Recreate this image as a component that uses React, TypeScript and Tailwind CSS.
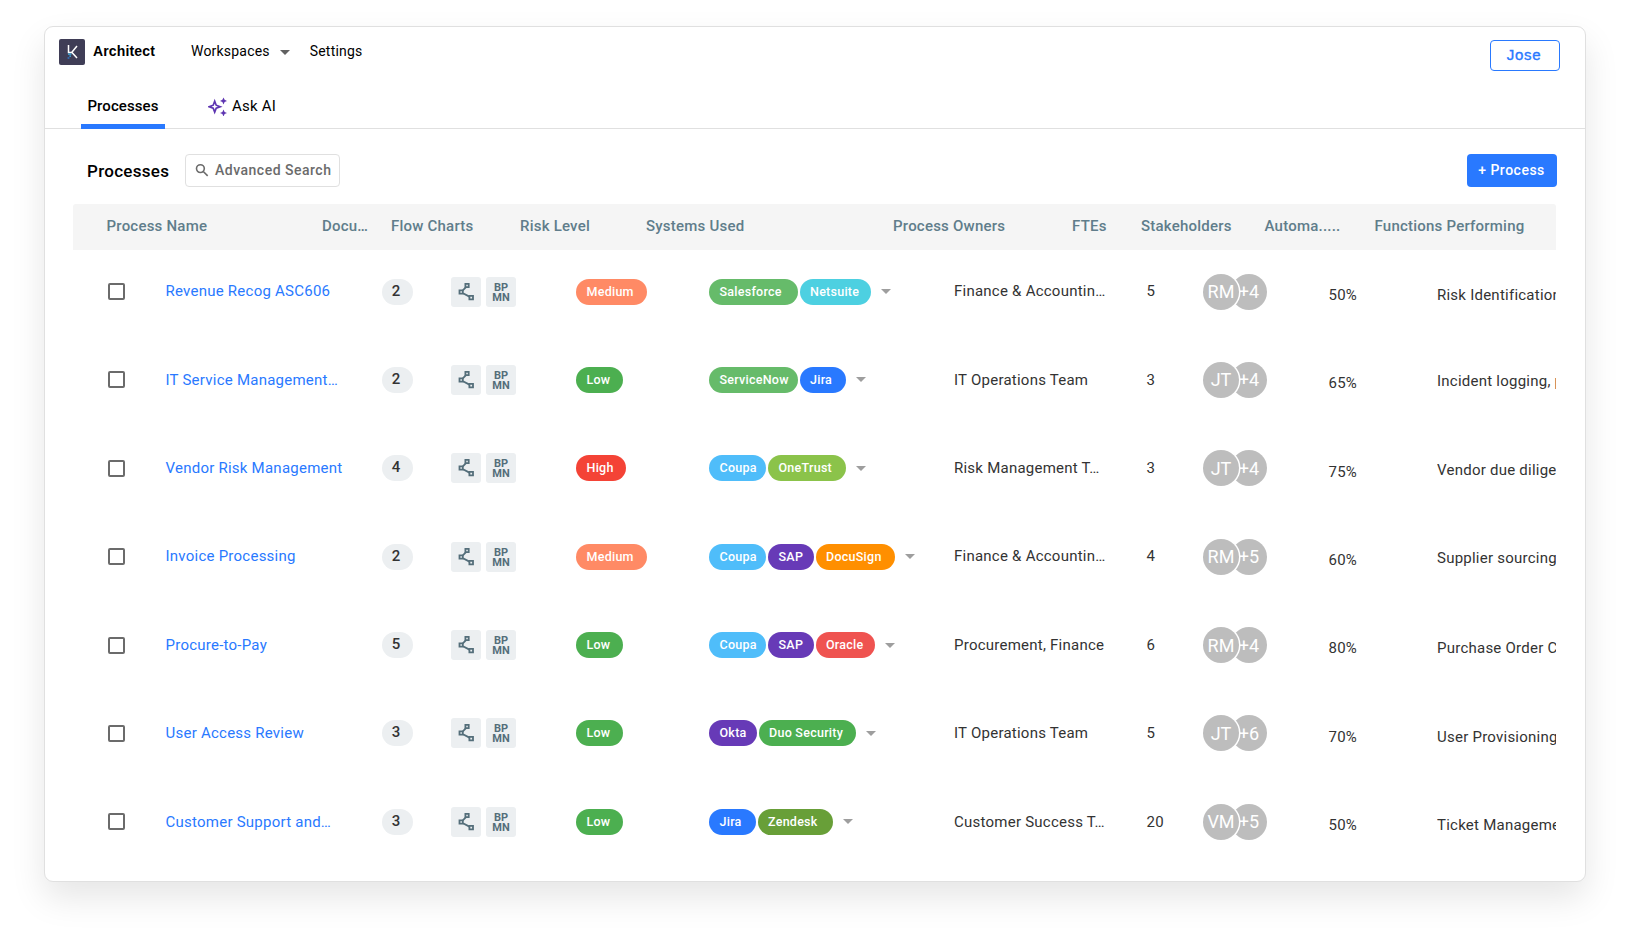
import { useState } from "react";

type Chip = { label: string; cls: string };
type Row = {
  name: string;
  docs: number;
  risk: "Low" | "Medium" | "High";
  systems: Chip[];
  owners: string;
  ftes: number;
  initials: string;
  more: number;
  automation: number;
  functions: string;
  raised?: boolean;
};

const RISK = {
  Low: "w-[47px] bg-[#4caf50]",
  Medium: "w-[71px] bg-[#ff8a65]",
  High: "w-[50px] bg-[#f44336]",
};

const COUPA: Chip = { label: "Coupa", cls: "w-[57px] bg-[#4fbdfa]" };
const SAP: Chip = { label: "SAP", cls: "w-[45.5px] bg-[#673ab7]" };
const JIRA: Chip = { label: "Jira", cls: "w-[46.5px] bg-[#2979ff]" };

const ROWS: Row[] = [
  {
    name: "Revenue Recog ASC606", docs: 2, risk: "Medium",
    systems: [{ label: "Salesforce", cls: "w-[88.5px] bg-[#66bb6a]" }, { label: "Netsuite", cls: "w-[71px] bg-[#4dd0e1]" }],
    owners: "Finance & Accountin…", ftes: 5, initials: "RM", more: 4, automation: 50, functions: "Risk Identification",
  },
  {
    name: "IT Service Management…", docs: 2, risk: "Low",
    systems: [{ label: "ServiceNow", cls: "w-[88.5px] bg-[#66bb6a]" }, JIRA],
    owners: "IT Operations Team", ftes: 3, initials: "JT", more: 4, automation: 65, functions: "Incident logging, prioritization", raised: true,
  },
  {
    name: "Vendor Risk Management", docs: 4, risk: "High",
    systems: [COUPA, { label: "OneTrust", cls: "w-[78px] bg-[#8bc34a]" }],
    owners: "Risk Management T…", ftes: 3, initials: "JT", more: 4, automation: 75, functions: "Vendor due diligence", raised: true,
  },
  {
    name: "Invoice Processing", docs: 2, risk: "Medium",
    systems: [COUPA, SAP, { label: "DocuSign", cls: "w-[79px] bg-[#ff8f00]" }],
    owners: "Finance & Accountin…", ftes: 4, initials: "RM", more: 5, automation: 60, functions: "Supplier sourcing", raised: true,
  },
  {
    name: "Procure-to-Pay", docs: 5, risk: "Low",
    systems: [COUPA, SAP, { label: "Oracle", cls: "w-[59.5px] bg-[#ef5350]" }],
    owners: "Procurement, Finance", ftes: 6, initials: "RM", more: 4, automation: 80, functions: "Purchase Order Creation",
  },
  {
    name: "User Access Review", docs: 3, risk: "Low",
    systems: [{ label: "Okta", cls: "w-[47.5px] bg-[#673ab7]" }, { label: "Duo Security", cls: "w-[97px] bg-[#4caf50]" }],
    owners: "IT Operations Team", ftes: 5, initials: "JT", more: 6, automation: 70, functions: "User Provisioning",
  },
  {
    name: "Customer Support and…", docs: 3, risk: "Low",
    systems: [JIRA, { label: "Zendesk", cls: "w-[75.5px] bg-[#689f38]" }],
    owners: "Customer Success T…", ftes: 20, initials: "VM", more: 5, automation: 50, functions: "Ticket Management",
  },
];

const HEADERS = [
  "Process Name", "Docu…", "Flow Charts", "Risk Level", "Systems Used",
  "Process Owners", "FTEs", "Stakeholders", "Automa.....", "Functions Performing",
];

function Caret({ className }: { className: string }) {
  return (
    <svg viewBox="0 0 10 5" className={`h-[5px] w-[10px] shrink-0 ${className}`} fill="currentColor">
      <path d="M0 0h10L5 5z" />
    </svg>
  );
}

function Logo() {
  return (
    <svg viewBox="0 0 26 26" className="size-[26px] shrink-0" fill="none">
      <rect width="26" height="26" rx="2" fill="#3f3d56" />
      <path d="M9.5 6v7.5h3.2L18 7M13 13.5l5 5.5" stroke="#fff" strokeWidth="1.5" />
      <path d="M9 15.2h3.4M10.4 17.2h1.6" stroke="#3fb2e8" strokeWidth="1.2" />
      <path d="M8.6 19h1.8" stroke="#2f80d8" strokeWidth="1.3" />
    </svg>
  );
}

function Sparkles() {
  return (
    <svg viewBox="0 0 20 20" className="size-5 shrink-0" fill="#5e35b1">
      <path d="M6.7 5.2 8.2 9.2 12.2 10.7 8.2 12.2 6.7 16.2 5.2 12.2 1.2 10.7 5.2 9.2z" fill="none" stroke="#5e35b1" strokeWidth="1.7" />
      <path d="m15.5 1.4 1.1 2.4 2.4 1.1-2.4 1.1-1.1 2.4L14.4 6 12 4.9l2.4-1.1z" />
      <path d="m15.5 13.5 1.1 2.4 2.4 1.1-2.4 1.1-1.1 2.4-1.1-2.4L12 17l2.4-1.1z" />
    </svg>
  );
}

function FlowIcon() {
  return (
    <svg viewBox="0 0 30 30" className="size-[30px]" fill="none" stroke="#546e7a" strokeWidth="1.8">
      <path d="m14.8 10.4-3 3M12 16.2l6.4 3.4" />
      <path d="M14.4 6.8h3.3v3.3h-3.3zM8.5 13.4h3.3v3.3H8.5zM18.4 18.8h3.6v3.5h-3.6z" />
    </svg>
  );
}

function Pill({ label, cls }: Chip) {
  return (
    <span className={`h-[26px] shrink-0 overflow-hidden whitespace-nowrap rounded-full pl-[10.5px] text-[12.5px] leading-[25px] font-medium tracking-[0.26px] text-white ${cls}`}>
      {label}
    </span>
  );
}

function ProcessRow({ row, checked, onCheck }: { row: Row; checked: boolean; onCheck: () => void }) {
  return (
    <div className="grid h-[88.4px] grid-cols-[57.5px_216px_69.5px_125px_133px_245px_192.5px_56.5px_125.5px_108.5px_118.5px] items-center whitespace-nowrap pl-[35px] text-[15px] tracking-[0.24px] text-[#333]">
      <button
        aria-pressed={checked}
        onClick={onCheck}
        className={`size-[17px] rounded-[2px] border-2 border-[#6b6b6b] ${checked ? "bg-[#6b6b6b]" : "bg-white"}`}
      />
      <a className="cursor-pointer text-[#2979ff]">{row.name}</a>
      <span className="h-[26px] w-[31px] rounded-full bg-[#eceff1] pr-[2px] text-center text-[15px] leading-[24px] font-medium tracking-normal">{row.docs}</span>
      <div className="flex gap-[5px]">
        <button className="size-[30px] rounded-[3px] bg-[#eceff1]"><FlowIcon /></button>
        <button className="flex size-[30px] flex-col items-center justify-center rounded-[3px] bg-[#eceff1] pt-[2px] text-[11px] leading-[10px] font-bold tracking-normal text-[#546e7a]">
          <span>BP</span>
          <span>MN</span>
        </button>
      </div>
      <div className="flex"><Pill label={row.risk} cls={RISK[row.risk]} /></div>
      <div className="flex items-center gap-[2px]">
        {row.systems.map((s) => <Pill key={s.label} {...s} />)}
        <Caret className="ml-2 text-[#9e9e9e]" />
      </div>
      <span>{row.owners}</span>
      <span>{row.ftes}</span>
      <div className="flex text-[18px] tracking-normal text-white">
        <span className="z-10 flex size-[36px] items-center justify-center rounded-full bg-[#bdbdbd] ring-[1.5px] ring-white">{row.initials}</span>
        <span className="-ml-[8px] flex size-[36px] items-center justify-center rounded-full bg-[#bdbdbd]">+{row.more}</span>
      </div>
      <span className="pt-[7px]">{row.automation}%</span>
      <span className={`overflow-hidden ${row.raised ? "pt-[3px]" : "pt-[7px]"}`}>{row.functions}</span>
    </div>
  );
}

export default function App() {
  const [selected, setSelected] = useState<string[]>([]);

  const toggle = (name: string) =>
    setSelected((s) => (s.includes(name) ? s.filter((n) => n !== name) : [...s, name]));

  return (
    <div className="h-[945px] w-[1630px] overflow-hidden bg-white pt-[26px] pl-[44px] font-[Roboto,sans-serif] text-black">
      <div className="h-[856px] w-[1542px] rounded-[9px] border border-[#e0e0e0] bg-white shadow-[0_16px_34px_rgba(0,0,0,0.1)]">
        {/* top bar */}
        <div className="flex h-[54px] items-start justify-between pr-[24px] pl-[14px]">
          <div className="flex items-center pt-[12px] text-[14px] tracking-[0.2px]">
            <Logo />
            <span className="ml-2 w-[98px] pb-px font-['Liberation_Sans',sans-serif] text-[14px] font-bold tracking-[0.15px]">Architect</span>
            <span className="pb-[2px]">Workspaces</span>
            <Caret className="ml-[10px] text-[#616161]" />
            <span className="ml-[20px] pb-[2px]">Settings</span>
          </div>
          <button className="mt-[13px] mr-px h-[31px] w-[70px] rounded-[4px] border border-[#2979ff] pr-[2px] font-['Liberation_Sans',sans-serif] text-[15px] tracking-[0.7px] text-[#2979ff] [-webkit-text-stroke:0.35px]">Jose</button>
        </div>

        {/* tabs */}
        <div className="flex h-[48px] items-end border-b border-[#e0e0e0] pl-[36px] text-[15px]">
          <div className="-mb-px flex h-[48px] w-[84px] justify-center border-b-[5px] border-[#2979ff] pt-[14px] leading-[22px] font-medium tracking-[0.1px]">Processes</div>
          <div className="ml-[43px] flex h-[48px] items-center gap-[4px] pt-[4px] tracking-[0.2px]">
            <Sparkles />
            <span>Ask AI</span>
          </div>
        </div>

        {/* page title and actions */}
        <div className="flex items-center pt-[25px] pr-[28px] pl-[42px]">
          <h1 className="w-[98px] pt-[2px] text-[17px] font-medium tracking-[0.3px]">Processes</h1>
          <button className="flex h-[33px] w-[155px] items-center rounded-[4px] border border-[#e0e0e0] pb-px pl-[9px] text-[14px] font-medium tracking-[0.5px] whitespace-nowrap text-[#6b6b6b]">
            <svg viewBox="0 0 14 14" className="mr-[6px] size-[14px] shrink-0" fill="none" stroke="#6b6b6b" strokeWidth="1.6">
              <circle cx="5.4" cy="5.6" r="3.9" />
              <path d="m8.3 8.5 4.4 4.4" />
            </svg>
            Advanced Search
          </button>
          <button className="ml-auto h-[33px] w-[90px] rounded-[4px] bg-[#2979ff] pr-px pb-px text-[14px] font-medium tracking-[0.5px] text-white">+ Process</button>
        </div>

        {/* process table */}
        <div className="mt-[17px] ml-[28px] w-[1483px]">
          <div className="grid h-[46px] grid-cols-[215.5px_69px_129px_126px_247px_179px_69px_123.5px_110px_1fr] items-center rounded-t-[3px] bg-[#f5f5f5] pb-px pl-[33.5px] text-[15px] font-medium tracking-[0.22px] whitespace-nowrap text-[#607d8b]">
            {HEADERS.map((h) => <span key={h}>{h}</span>)}
          </div>
          <div className="-mt-[2.7px]">
            {ROWS.map((r) => (
              <ProcessRow key={r.name} row={r} checked={selected.includes(r.name)} onCheck={() => toggle(r.name)} />
            ))}
          </div>
        </div>
      </div>
    </div>
  );
}
